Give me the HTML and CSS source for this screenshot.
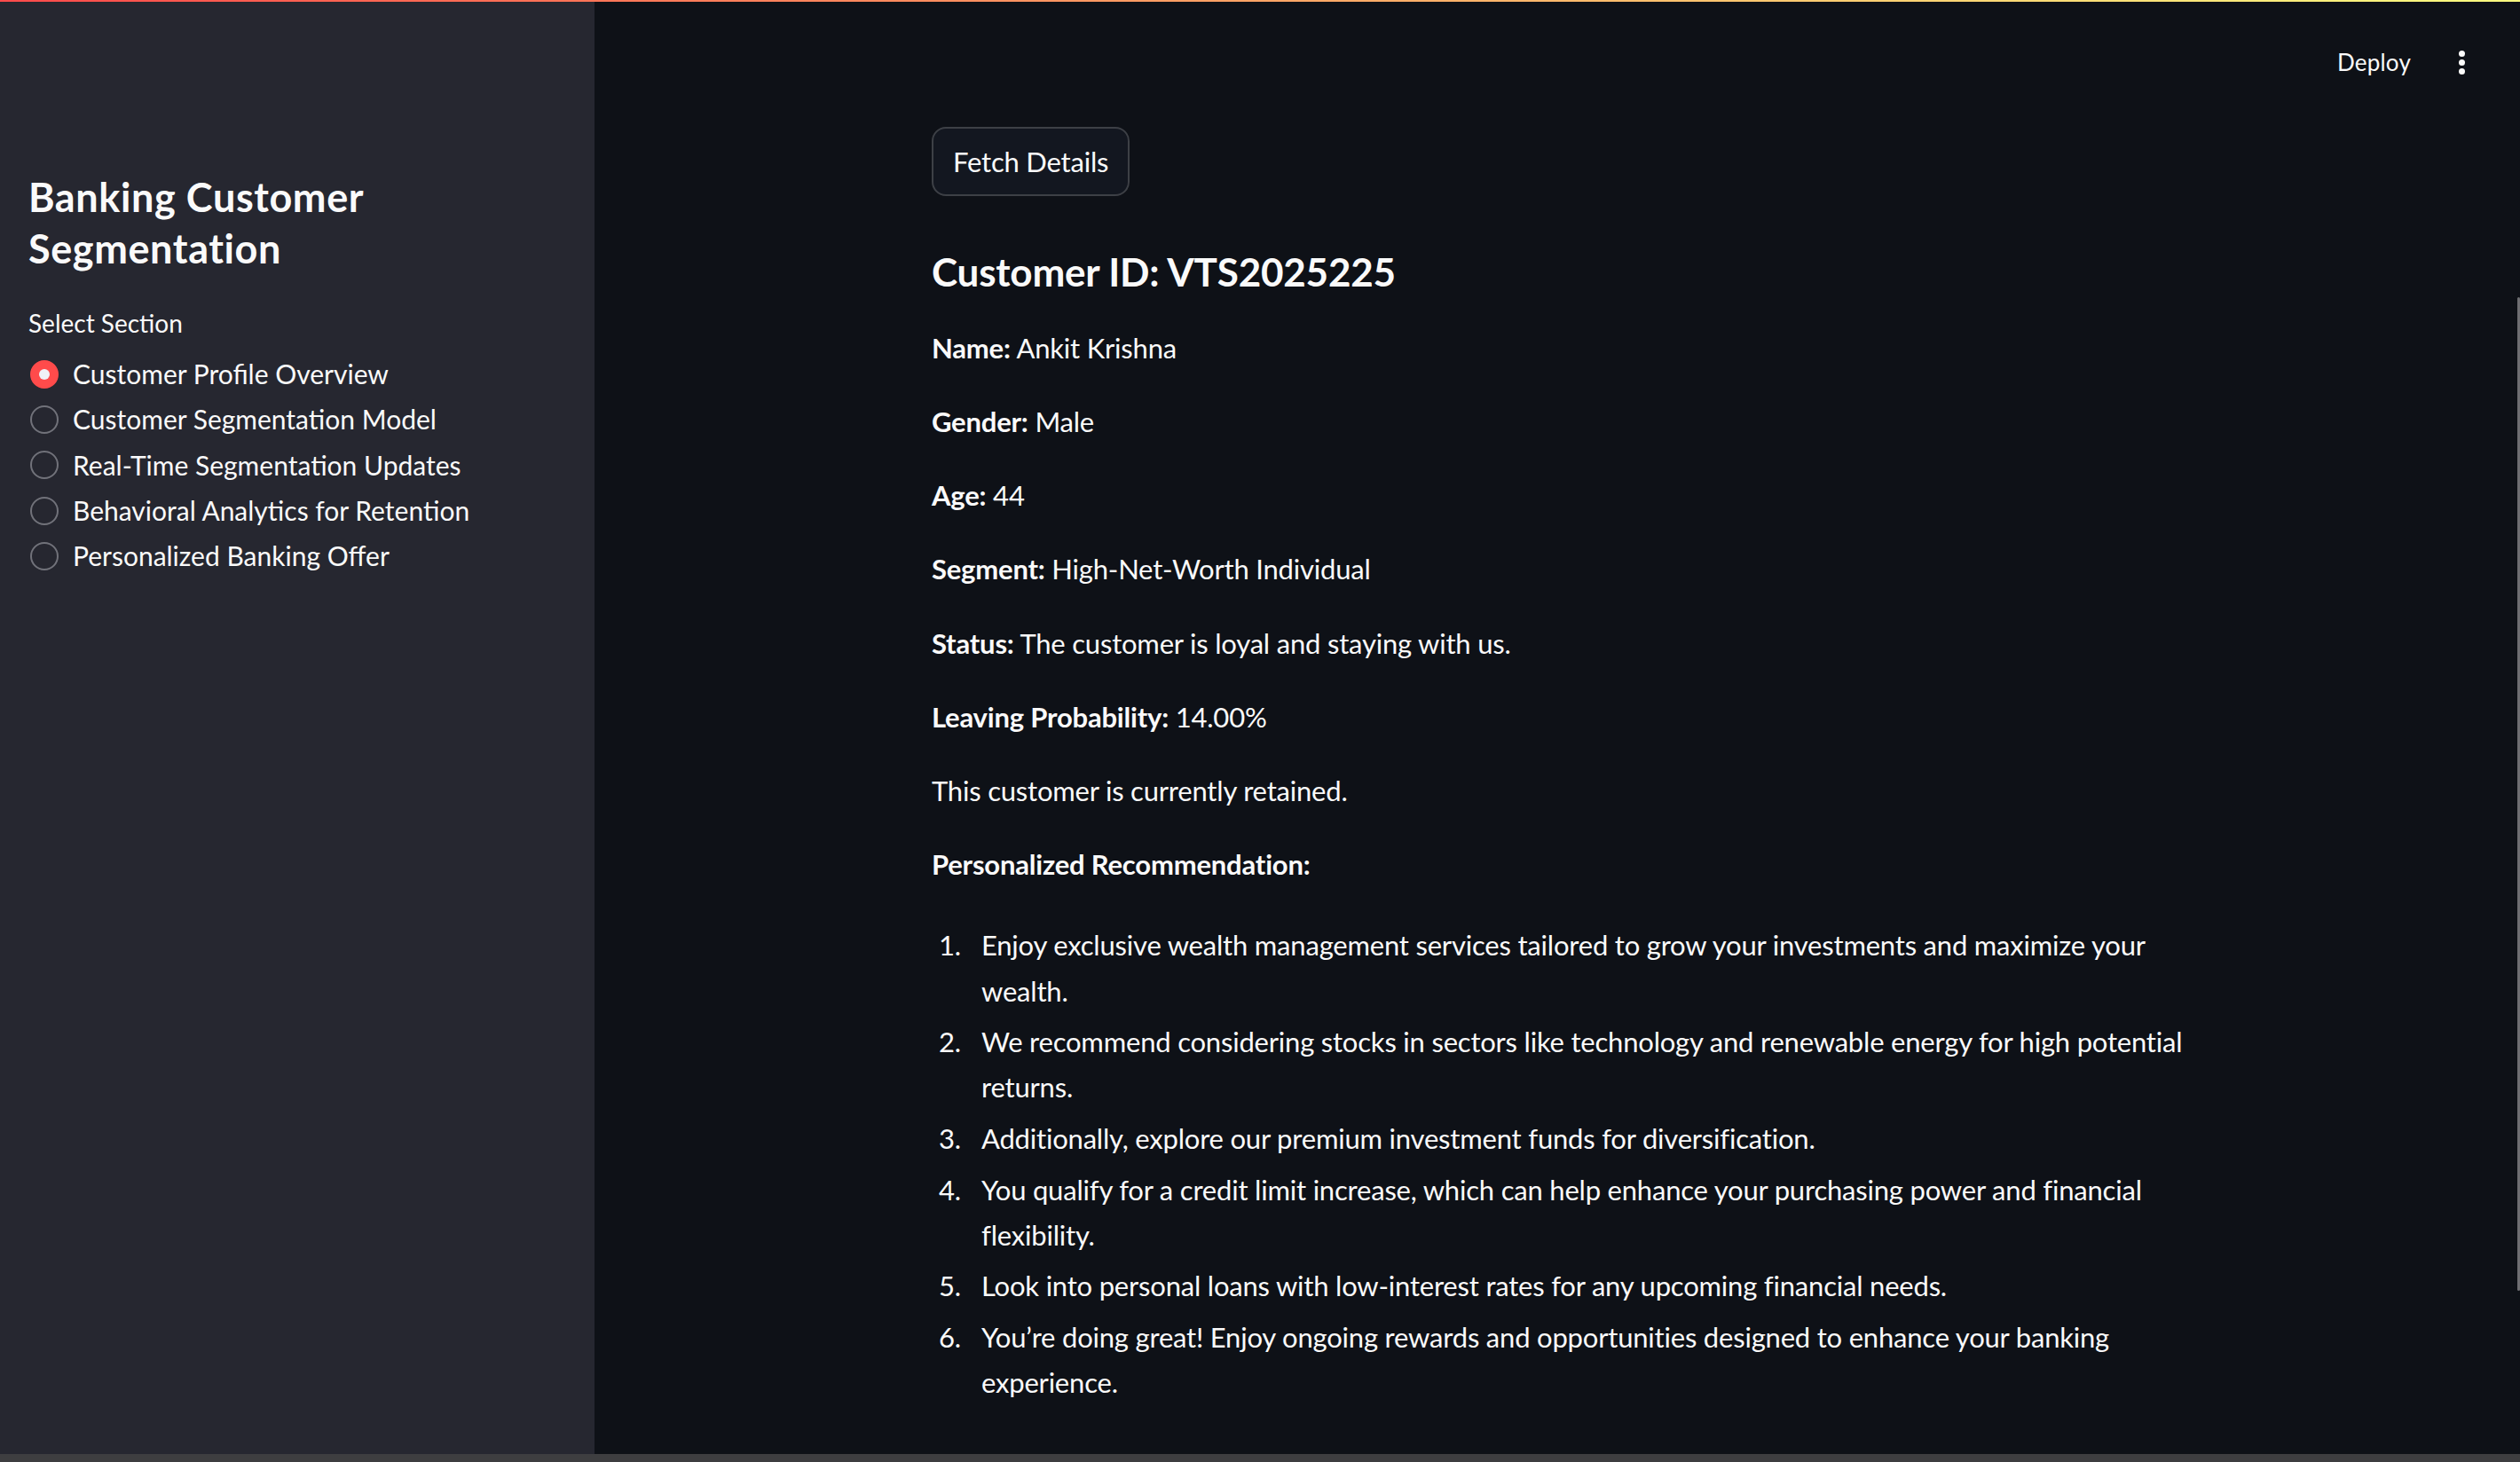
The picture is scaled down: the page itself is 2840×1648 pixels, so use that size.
FILE: index.html
```html
<!DOCTYPE html>
<html lang="en">
<head>
<meta charset="utf-8">
<title>Banking Customer Segmentation</title>
<link rel="stylesheet" href="styles.css">
</head>
<body>
<div class="decoration"></div>
<div class="app">
  <aside class="sidebar">
    <h2 class="side-title">Banking Customer Segmentation</h2>
    <div class="radio-label">Select Section</div>
    <div class="radio-group">
      <div class="radio-row"><span class="radio radio-on"></span><span class="radio-text">Customer Profile Overview</span></div>
      <div class="radio-row"><span class="radio"></span><span class="radio-text">Customer Segmentation Model</span></div>
      <div class="radio-row"><span class="radio"></span><span class="radio-text">Real-Time Segmentation Updates</span></div>
      <div class="radio-row"><span class="radio"></span><span class="radio-text">Behavioral Analytics for Retention</span></div>
      <div class="radio-row"><span class="radio"></span><span class="radio-text">Personalized Banking Offer</span></div>
    </div>
  </aside>
  <main class="main">
    <header class="toolbar">
      <span class="deploy">Deploy</span>
      <span class="kebab"><i></i><i></i><i></i></span>
    </header>
    <section class="content">
      <button class="btn">Fetch Details</button>
      <h3 class="cust-id">Customer ID: VTS2025225</h3>
      <p><strong>Name:</strong> Ankit Krishna</p>
      <p><strong>Gender:</strong> Male</p>
      <p><strong>Age:</strong> 44</p>
      <p><strong>Segment:</strong> High-Net-Worth Individual</p>
      <p><strong>Status:</strong> The customer is loyal and staying with us.</p>
      <p><strong>Leaving Probability:</strong> 14.00%</p>
      <p>This customer is currently retained.</p>
      <p><strong>Personalized Recommendation:</strong></p>
      <ol class="recs">
        <li><span>Enjoy exclusive wealth management services tailored to grow your investments and maximize your wealth.</span></li>
        <li><span>We recommend considering stocks in sectors like technology and renewable energy for high potential returns.</span></li>
        <li><span>Additionally, explore our premium investment funds for diversification.</span></li>
        <li><span>You qualify for a credit limit increase, which can help enhance your purchasing power and financial flexibility.</span></li>
        <li><span>Look into personal loans with low-interest rates for any upcoming financial needs.</span></li>
        <li><span>You’re doing great! Enjoy ongoing rewards and opportunities designed to enhance your banking experience.</span></li>
      </ol>
    </section>
    <div class="vscroll"></div>
  </main>
</div>
<div class="hscroll"></div>
</body>
</html>
```
FILE: styles.css
```css
* { box-sizing: border-box; }

html, body {
  margin: 0;
  padding: 0;
  width: 2840px;
  height: 1648px;
  overflow: hidden;
  background: #0e1117;
  color: #fafafa;
  font-family: "Source Sans Pro", Lato, "Open Sans", sans-serif;
}

.decoration {
  position: absolute;
  top: 0;
  left: 0;
  right: 0;
  height: 2px;
  background: linear-gradient(90deg, #ff4b4b, #fffd80);
  z-index: 5;
}

.app {
  display: flex;
  height: 1639px;
}

/* ---------- Sidebar ---------- */
.sidebar {
  width: 670px;
  flex: 0 0 670px;
  background: #262730;
  padding: 193px 32px 0 32px;
  display: flex;
  flex-direction: column;
}

.side-title {
  margin: 0;
  font-size: 45px;
  font-weight: 700;
  line-height: 58px;
  letter-spacing: 0.6px;
  width: 460px;
}

.radio-label {
  margin-top: 35px;
  font-size: 28px;
  line-height: 40px;
}

.radio-group {
  margin-top: 12px;
  padding-left: 2px;
  display: flex;
  flex-direction: column;
}

.radio-row {
  display: flex;
  align-items: center;
  gap: 16px;
  height: 51.3px;
}

.radio {
  width: 32px;
  height: 32px;
  flex: 0 0 32px;
  border-radius: 50%;
  border: 2px solid #71727a;
  display: flex;
  align-items: center;
  justify-content: center;
}

.radio-on {
  background: #ff4b4b;
  border-color: #ff4b4b;
}

.radio-on::after {
  content: "";
  width: 12px;
  height: 12px;
  border-radius: 50%;
  background: #f0f2f6;
}

.radio-text {
  font-size: 30px;
  line-height: 51.3px;
  white-space: nowrap;
}

/* ---------- Main ---------- */
.main {
  flex: 1;
  position: relative;
  display: flex;
  flex-direction: column;
}

.toolbar {
  height: 140px;
  display: flex;
  justify-content: flex-end;
  align-items: center;
  gap: 47px;
  padding-right: 56px;
}

.deploy {
  font-size: 26px;
  line-height: 31px;
  letter-spacing: 0.2px;
}

.kebab {
  width: 20px;
  display: flex;
  flex-direction: column;
  align-items: center;
  gap: 3px;
}

.kebab i {
  display: block;
  width: 7px;
  height: 7px;
  border-radius: 50%;
  background: #fafafa;
}

.content {
  margin-left: 380px;
  width: 1440px;
  padding-top: 3px;
  display: flex;
  flex-direction: column;
  align-items: flex-start;
  font-size: 31px;
  letter-spacing: -0.2px;
}

.btn {
  height: 78px;
  padding: 0 22px;
  border: 2px solid #3d4046;
  border-radius: 16px;
  background: #131720;
  color: #fafafa;
  font-family: inherit;
  font-size: 31px;
  letter-spacing: -0.2px;
  line-height: 1;
}

.cust-id {
  margin: 59px 0 34px 0;
  font-size: 44px;
  font-weight: 700;
  line-height: 52.8px;
  letter-spacing: -0.2px;
}

.content p {
  margin: 0 0 32px 0;
  line-height: 51.2px;
}

.content strong {
  font-weight: 700;
}

.recs {
  list-style: none;
  counter-reset: rec;
  margin: 8px 0 0 0;
  padding: 0 0 0 8px;
  width: 100%;
}

.recs li {
  counter-increment: rec;
  display: flex;
  line-height: 51.2px;
  margin-bottom: 6.4px;
}

.recs li::before {
  content: counter(rec) ".";
  flex: 0 0 48px;
}

.recs li span {
  flex: 1;
}

.vscroll {
  position: absolute;
  right: 0;
  top: 335px;
  width: 3px;
  height: 1120px;
  border-radius: 2px;
  background: #6e6e72;
}

.hscroll {
  height: 9px;
  background: #3e3e40;
}
```
